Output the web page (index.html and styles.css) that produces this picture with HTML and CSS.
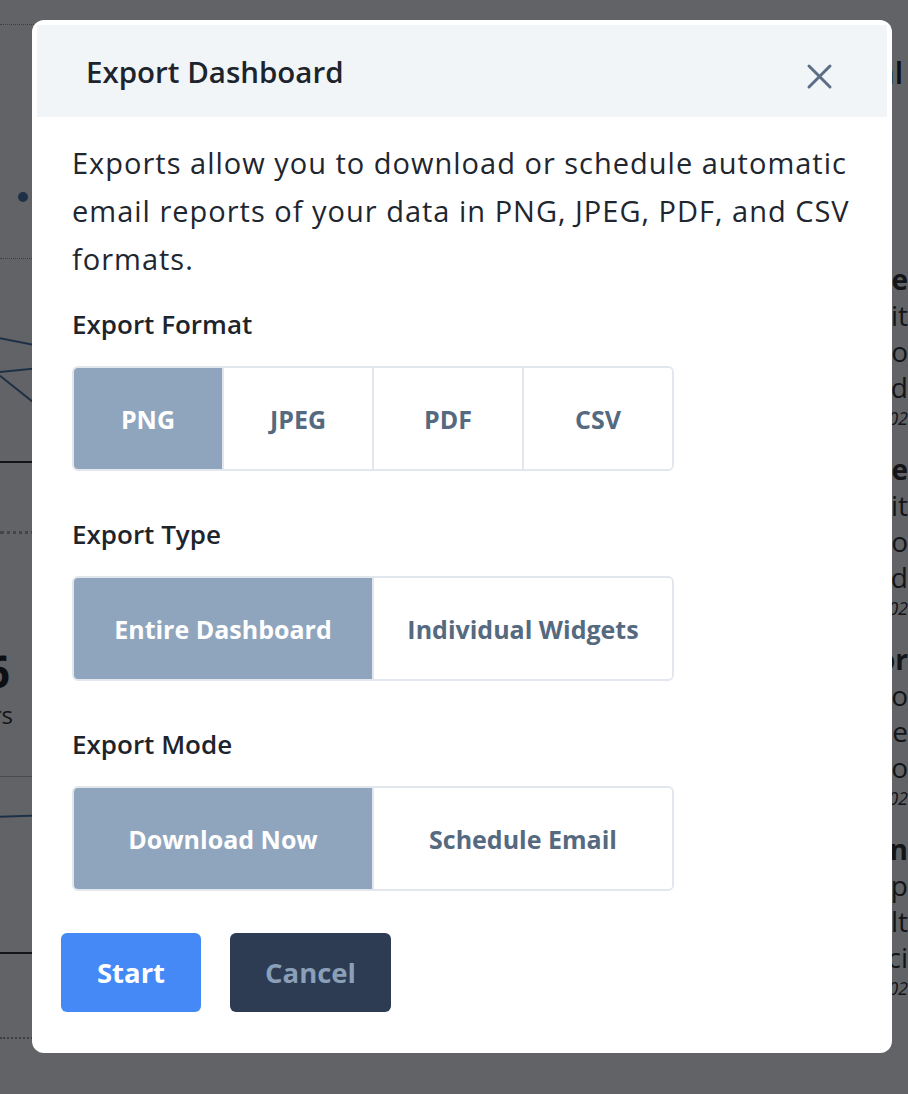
FILE: index.html
```html
<!DOCTYPE html>
<html lang="en">
<head>
  <meta charset="UTF-8" />
  <meta name="viewport" content="width=device-width, initial-scale=1.0" />
  <title>Analytics - Export Dashboard</title>
  <link rel="stylesheet" href="styles.css">
</head>
<body>
  <div class="dashboard">
    <div class="main-col">
      <section class="card card-map">
        <span class="map-dot"></span>
      </section>
      <section class="card card-chart">
        <svg class="chart" viewBox="0 0 60 204" preserveAspectRatio="none">
          <polyline points="0,80 60,92" />
          <polyline points="0,114 60,108" />
          <polyline points="0,118 40,150 60,160" />
        </svg>
      </section>
      <section class="card card-stat">
        <div class="stat-value"><span>1,256</span></div>
        <div class="stat-label"><span>Active users</span></div>
      </section>
      <section class="card card-trend">
        <svg class="chart" viewBox="0 0 60 176" preserveAspectRatio="none">
          <polyline points="0,40 60,38" />
        </svg>
      </section>
      <div class="card card-foot"></div>
    </div>

    <aside class="activity">
      <h3 class="activity-head"><span>Journal</span></h3>
      <div class="activity-item">
        <p class="item-title"><span>Time</span></p>
        <p><span>Spirit</span></p>
        <p><span>Limbo</span></p>
        <p><span>Sold</span></p>
        <p class="item-date"><span>01.02</span></p>
      </div>
      <div class="activity-item">
        <p class="item-title"><span>Time</span></p>
        <p><span>Spirit</span></p>
        <p><span>Limbo</span></p>
        <p><span>Sold</span></p>
        <p class="item-date"><span>03.02</span></p>
      </div>
      <div class="activity-item">
        <p class="item-title"><span>Major</span></p>
        <p><span>Photo</span></p>
        <p><span>THe</span></p>
        <p><span>Auto</span></p>
        <p class="item-date"><span>07.02</span></p>
      </div>
      <div class="activity-item">
        <p class="item-title"><span>Plan</span></p>
        <p><span>Recip</span></p>
        <p><span>Alt</span></p>
        <p><span>Sci</span></p>
        <p class="item-date"><span>09.02</span></p>
      </div>
    </aside>
  </div>

  <div class="overlay"></div>

  <div class="modal" role="dialog" aria-labelledby="exportTitle">
    <div class="modal-header">
      <h2 id="exportTitle" class="modal-title">Export Dashboard</h2>
      <button class="close-btn" aria-label="Close">
        <svg viewBox="0 0 27 27" width="27" height="27">
          <path d="M3 3 L24 24 M24 3 L3 24" />
        </svg>
      </button>
    </div>

    <div class="modal-body">
      <p class="intro">Exports allow you to download or schedule automatic email reports of your data in PNG, JPEG, PDF, and CSV formats.</p>

      <div class="field">
        <div class="field-label">Export Format</div>
        <div class="segmented">
          <button class="segment active">PNG</button>
          <button class="segment">JPEG</button>
          <button class="segment">PDF</button>
          <button class="segment">CSV</button>
        </div>
      </div>

      <div class="field">
        <div class="field-label">Export Type</div>
        <div class="segmented">
          <button class="segment active">Entire Dashboard</button>
          <button class="segment">Individual Widgets</button>
        </div>
      </div>

      <div class="field">
        <div class="field-label">Export Mode</div>
        <div class="segmented">
          <button class="segment active">Download Now</button>
          <button class="segment">Schedule Email</button>
        </div>
      </div>

      <div class="actions">
        <button class="btn btn-primary">Start</button>
        <button class="btn btn-dark">Cancel</button>
      </div>
    </div>
  </div>
</body>
</html>
```

FILE: styles.css
```css
body {
  margin: 0;
  font-family: "Open Sans", "Noto Sans", sans-serif;
  background: #fff;
  color: #1e2630;
}

/* page behind the dialog */
.dashboard {
  display: flex;
  justify-content: space-between;
  height: 1094px;
  overflow: hidden;
}
.main-col {
  width: 60px;
  flex-shrink: 0;
}
.card {
  box-sizing: border-box;
}
.card-map {
  margin-top: 24px;
  height: 235px;
  padding: 167px 0 0 18px;
  border-top: 1px dotted #999;
  border-bottom: 1px dotted #999;
}
.map-dot {
  display: block;
  width: 10px;
  height: 10px;
  border-radius: 50%;
  background: #3d6ea6;
}
.card-chart {
  height: 204px;
  border-bottom: 2px solid #222;
}
.chart {
  display: block;
  width: 100%;
  height: 100%;
}
.chart polyline {
  fill: none;
  stroke: #3d6ea6;
  stroke-width: 2;
  vector-effect: non-scaling-stroke;
}
.card-stat {
  margin-top: 68px;
  height: 246px;
  padding-top: 112px;
  border-top: 3px dotted #aaa;
  border-bottom: 1px solid #bbb;
}
.stat-value,
.stat-label {
  display: flex;
  justify-content: flex-end;
  width: 10px;
  overflow: hidden;
  white-space: nowrap;
}
.stat-value {
  font-size: 44px;
  font-weight: 700;
  line-height: 50px;
  color: #111;
}
.stat-label {
  width: 13px;
  margin-top: 2px;
  font-size: 24px;
  color: #222;
}
.card-trend {
  height: 177px;
  border-bottom: 2px solid #222;
}
.card-foot {
  height: 85px;
  border-bottom: 2px dotted #999;
}

.activity {
  width: 24px;
  flex-shrink: 0;
  overflow: hidden;
  white-space: nowrap;
  padding-top: 52px;
}
.activity-head,
.activity-item p {
  display: flex;
  justify-content: flex-end;
  margin: 0;
}
.activity-head {
  width: 19px;
  margin-bottom: 168px;
  font-size: 30px;
  font-weight: 600;
  color: #111;
}
.activity-item {
  margin-bottom: 20px;
}
.activity-item p {
  font-size: 28px;
  line-height: 36px;
  color: #222;
}
.activity-item .item-title {
  font-weight: 700;
}
.activity-item .item-date {
  font-size: 18px;
  font-style: italic;
  line-height: 26px;
}

.overlay {
  position: fixed;
  inset: 0;
  background: rgba(14, 16, 20, 0.65);
}

/* export dialog */
.modal {
  position: absolute;
  top: 20px;
  left: 32px;
  width: 860px;
  box-sizing: border-box;
  padding: 5px;
  background: #fff;
  border-radius: 12px;
}
.modal-header {
  display: flex;
  align-items: center;
  justify-content: space-between;
  height: 92px;
  padding: 0 54px 0 49px;
  background: #f2f5f8;
}
.modal-title {
  margin: 0;
  font-size: 29.5px;
  font-weight: 600;
  color: #1d242c;
}
.close-btn {
  margin-top: 11px;
  padding: 0;
  border: 0;
  background: none;
  line-height: 0;
  cursor: pointer;
}
.close-btn path {
  stroke: #5b6e85;
  stroke-width: 3;
  stroke-linecap: round;
}
.modal-body {
  padding: 22px 35px 36px;
}
.intro {
  margin: 0 -20px 23px 0;
  font-size: 29px;
  letter-spacing: 1px;
  line-height: 48px;
}
.field + .field {
  margin-top: 45px;
}
.field-label {
  margin-bottom: 24px;
  font-size: 26px;
  font-weight: 600;
  line-height: 36px;
  color: #1d242c;
}
.segmented {
  display: flex;
  width: 602px;
  height: 105px;
  box-sizing: border-box;
  border: 2px solid #e2e7ee;
  border-radius: 6px;
  overflow: hidden;
}
.segment {
  flex: 1;
  padding: 0;
  border: 0;
  border-left: 2px solid #e2e7ee;
  background: #fff;
  font-family: inherit;
  font-size: 25px;
  font-weight: 700;
  color: #55697f;
  cursor: pointer;
}
.segment:first-child {
  border-left: 0;
}
.segment.active {
  background: #8fa5bd;
  color: #fff;
}
.actions {
  display: flex;
  gap: 29px;
  margin: 42px 0 0 -11px;
}
.btn {
  height: 79px;
  padding: 0;
  border: 0;
  border-radius: 6px;
  font-family: inherit;
  font-size: 27.5px;
  font-weight: 700;
  cursor: pointer;
}
.btn-primary {
  width: 140px;
  background: #4589f7;
  color: #fff;
}
.btn-dark {
  width: 161px;
  background: #2d3c52;
  color: #8a9fb8;
}
```
